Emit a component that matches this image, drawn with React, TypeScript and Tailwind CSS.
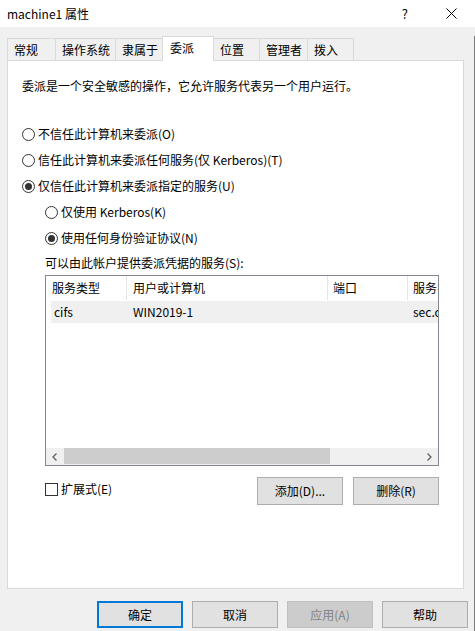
import React from "react";

const font = { fontFamily: '"Noto Sans CJK SC", "Noto Sans", sans-serif' };

function Radio({ checked }: { checked?: boolean }) {
  return (
    <span className="w-[13px] h-[13px] rounded-full border border-[#333333] bg-white flex items-center justify-center shrink-0">
      {checked && <span className="w-[7px] h-[7px] rounded-full bg-[#333333]" />}
    </span>
  );
}

function RadioRow({ label, checked, indent }: { label: string; checked?: boolean; indent?: boolean }) {
  return (
    <div className={`h-[26px] flex items-center gap-[3px] ${indent ? "pl-[37px]" : "pl-[14px]"}`}>
      <Radio checked={checked} />
      <span className="leading-[16px]">{label}</span>
    </div>
  );
}

const tabs = [
  { name: "常规", w: "w-[49px]" },
  { name: "操作系统", w: "w-[61px]" },
  { name: "隶属于", w: "w-[48px]" },
  { name: "委派", w: "w-[52px]", active: true },
  { name: "位置", w: "w-[47px]" },
  { name: "管理者", w: "w-[49px]" },
  { name: "拨入", w: "w-[47px]" },
];

function Btn({ label, className = "" }: { label: string; className?: string }) {
  return (
    <div
      className={`w-[86px] h-[27px] border border-[#adadad] bg-[#e1e1e1] flex items-center justify-center leading-[16px] ${className}`}
    >
      {label}
    </div>
  );
}

export default function App() {
  return (
    <div className="w-[475px] h-[631px] bg-[#f0f0f0] text-[12px] text-black overflow-hidden" style={font}>
      {/* title bar */}
      <div className="h-[27px] bg-white flex items-center pl-[7px]">
        <span className="leading-[16px]">machine1 属性</span>
        <span className="ml-auto mr-[38px] leading-[16px] text-[13px]">?</span>
        <svg width="11" height="11" viewBox="0 0 11 11" className="mr-[18px]">
          <path d="M0.5 0.5 L10.5 10.5 M10.5 0.5 L0.5 10.5" stroke="#000" strokeWidth="1" />
        </svg>
      </div>

      <div className="border-r border-[#7a7a7a] h-[604px]">
        {/* tabs */}
        <div className="h-[24px] mt-[9px] pl-[8px] flex items-end">
          {tabs.map((t) =>
            t.active ? (
              <div
                key={t.name}
                className={`${t.w} -ml-px h-[25px] -mb-px relative z-10 bg-white border-l border-t border-r border-[#d9d9d9] pl-[7px] pb-[2px] flex items-center leading-[16px]`}
              >
                {t.name}
              </div>
            ) : (
              <div
                key={t.name}
                className={`${t.w} -ml-px h-[22px] border-l border-t border-r border-[#d9d9d9] pl-[6px] flex items-center leading-[16px]`}
              >
                {t.name}
              </div>
            )
          )}
        </div>

        {/* panel */}
        <div className="ml-[7px] w-[457px] h-[529px] border border-[#d9d9d9] bg-white flex flex-col">
          <div className="mt-[17px] pl-[14px] leading-[16px]">
            委派是一个安全敏感的操作，它允许服务代表另一个用户运行。
          </div>

          <div className="mt-[27px]">
            <RadioRow label="不信任此计算机来委派(O)" />
            <RadioRow label="信任此计算机来委派任何服务(仅 Kerberos)(T)" />
            <RadioRow label="仅信任此计算机来委派指定的服务(U)" checked />
            <RadioRow label="仅使用 Kerberos(K)" indent />
            <RadioRow label="使用任何身份验证协议(N)" checked indent />
          </div>

          <div className="h-[24px] pl-[37px] flex items-center leading-[16px]">
            可以由此帐户提供委派凭据的服务(S):
          </div>

          {/* list */}
          <div className="ml-[37px] w-[394px] h-[191px] border border-[#828790] flex flex-col overflow-hidden">
            <div className="h-[24px] flex shrink-0">
              <div className="w-[81px] border-r border-[#e5e5e5] pl-[6px] flex items-center leading-[16px]">服务类型</div>
              <div className="w-[201px] border-r border-[#e5e5e5] pl-[6px] flex items-center leading-[16px]">用户或计算机</div>
              <div className="w-[80px] border-r border-[#e5e5e5] pl-[5px] flex items-center leading-[16px]">端口</div>
              <div className="flex-1 pl-[5px] flex items-center leading-[16px] overflow-hidden whitespace-nowrap">服务名</div>
            </div>
            <div className="mt-[1px] ml-[5px] h-[22px] bg-[#f0f0f0] flex shrink-0">
              <div className="w-[76px] pl-[3px] flex items-center leading-[16px]">cifs</div>
              <div className="w-[201px] pl-[6px] flex items-center leading-[16px]">WIN2019-1</div>
              <div className="w-[80px]" />
              <div className="flex-1 pl-[5px] flex items-center leading-[16px] overflow-hidden whitespace-nowrap">sec.contoso.com</div>
            </div>
            <div className="flex-1" />
            <div className="h-[17px] bg-[#f0f0f0] flex shrink-0">
              <div className="w-[17px] flex items-center justify-center">
                <svg width="5" height="8" viewBox="0 0 5 8">
                  <path d="M4.5 0.5 L1 4 L4.5 7.5" stroke="#606060" strokeWidth="1.3" fill="none" />
                </svg>
              </div>
              <div className="ml-[1px] w-[266px] h-[16px] bg-[#cdcdcd]" />
              <div className="flex-1" />
              <div className="w-[17px] flex items-center justify-center">
                <svg width="5" height="8" viewBox="0 0 5 8">
                  <path d="M0.5 0.5 L4 4 L0.5 7.5" stroke="#606060" strokeWidth="1.3" fill="none" />
                </svg>
              </div>
            </div>
          </div>

          {/* checkbox + buttons */}
          <div className="mt-[11px] ml-[37px] w-[394px] flex items-start">
            <div className="mt-[5px] flex items-center gap-[3px]">
              <span className="w-[13px] h-[13px] border border-[#333333] bg-white" />
              <span className="leading-[14px]">扩展式(E)</span>
            </div>
            <div className="ml-auto flex gap-[10px]">
              <Btn label="添加(D)..." className="h-[28px]" />
              <Btn label="删除(R)" className="h-[28px]" />
            </div>
          </div>
        </div>

        {/* dialog buttons */}
        <div className="mt-[12px] pl-[97px] flex">
          <div className="w-[86px] h-[27px] border-2 border-[#0078d7] bg-[#e1e1e1] flex items-center justify-center leading-[16px]">
            确定
          </div>
          <Btn label="取消" className="ml-[9px]" />
          <div className="ml-[9px] w-[86px] h-[27px] border border-[#bfbfbf] bg-[#cccccc] text-[#838383] flex items-center justify-center leading-[16px]">
            应用(A)
          </div>
          <Btn label="帮助" className="ml-[9px]" />
        </div>
      </div>
    </div>
  );
}
